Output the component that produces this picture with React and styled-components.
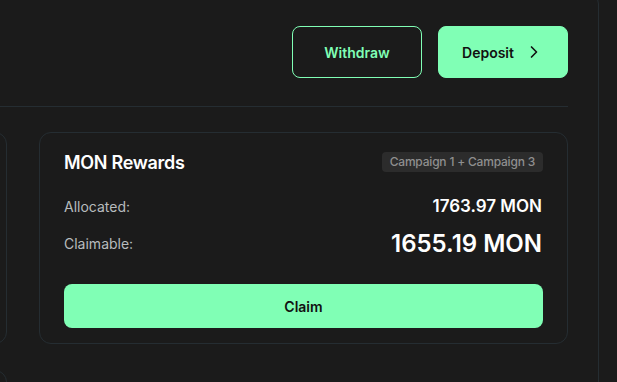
import styled, { createGlobalStyle } from 'styled-components';
import { ChevronRight } from 'lucide-react';

const GREEN = '#80ffb5';
const LINE = '#252d32';

const Global = createGlobalStyle`
  html, body { margin: 0; padding: 0; background: #1b1b1b; overflow: hidden; }
  body { font-family: 'Inter', 'Liberation Sans', sans-serif; color: #fff; }
`
const Page = styled.div`width: 617px;
  height: 382px;
  overflow: hidden;
`
const Panel = styled.div`margin-left: -553px;
  margin-top: -12px;
  width: 1090px;
  height: 420px;
  border: 1px solid ${LINE};
  border-radius: 16px;
  padding: 0 30px;
`
const Head = styled.div`display: flex;
  justify-content: flex-end;
  gap: 16px;
  padding: 37px 0 28px;
  border-bottom: 1px solid ${LINE};
`
const Btn = styled.button`width: 130px;
  height: 52px;
  border-radius: 8px;
  font-family: inherit;
  font-size: 14px;
  font-weight: 600;
  display: flex;
  align-items: center;
  justify-content: center;
  gap: 10px;
  cursor: pointer;
  padding: 0;
  border: 1px solid ${GREEN};
  background: ${p => p.$solid ? GREEN : 'transparent'};
  color: ${p => p.$solid ? '#111' : GREEN};
`
const Grid = styled.div`display: grid;
  grid-template-columns: 529px 529px;
  column-gap: 32px;
  row-gap: 26px;
  padding-top: 25px;
`
const Card = styled.div`box-sizing: border-box;
  border: 1px solid ${LINE};
  border-radius: 12px;
  padding: 19px 24px 15px;
  min-height: ${p => p.$h || 0}px;
  display: flex;
  flex-direction: column;
`
const TitleRow = styled.div`display: flex;
  justify-content: space-between;
  align-items: center;
  height: 20px;
  margin-bottom: 22px;
`
const Title = styled.div`font-size: 18px;
  font-weight: 600;
  letter-spacing: -0.3px;
`
const Badge = styled.span`background: #2c2c2c;
  color: #8f8f8f;
  font-size: 12px;
  font-weight: 500;
  line-height: 20px;
  padding: 0 8px;
  border-radius: 4px;
  letter-spacing: -0.2px;
`
const Row = styled.div`display: flex;
  justify-content: space-between;
  align-items: center;
  height: ${p => p.$big ? 28 : 24}px;
  margin-bottom: ${p => p.$big ? 0 : 11}px;
`
const Label = styled.span`font-size: 14px;
  color: #b7bbbe;
`
const Value = styled.span`font-size: ${p => p.$big ? 24 : 17}px;
  font-weight: 600;
  letter-spacing: 0;
  padding-right: 1px;
`
const Claim = styled.button`margin-top: 27px;
  height: 44px;
  border: none;
  border-radius: 8px;
  background: ${GREEN};
  color: #111;
  font-family: inherit;
  font-size: 14px;
  font-weight: 600;
  cursor: pointer;
`

function App() {
    return (<Page>
        <Global/>
        <Panel>
            <Head>
                <Btn>Withdraw</Btn>
                <Btn $solid>Deposit <ChevronRight size={20} strokeWidth={2}/></Btn>
            </Head>
            <Grid>
                <Card/>
                <Card>
                    <TitleRow>
                        <Title>MON Rewards</Title>
                        <Badge>Campaign 1 + Campaign 3</Badge>
                    </TitleRow>
                    <Row><Label>Allocated:</Label><Value>1763.97 MON</Value></Row>
                    <Row $big><Label>Claimable:</Label><Value $big>1655.19 MON</Value></Row>
                    <Claim>Claim</Claim>
                </Card>
                <Card $h={120}/>
            </Grid>
        </Panel>
    </Page>);
}

export default App;
